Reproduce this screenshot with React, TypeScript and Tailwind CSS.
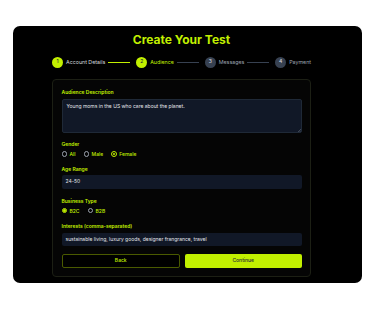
const steps = [
  { n: 1, label: "Account Details", state: "done" },
  { n: 2, label: "Audience", state: "current" },
  { n: 3, label: "Messages", state: "todo" },
  { n: 4, label: "Payment", state: "todo" },
];

function Radio({ label, checked }: { label: string; checked?: boolean }) {
  return (
    <label className="flex items-center gap-[2.5px]">
      <span
        className={`w-[5.5px] h-[5.5px] rounded-full border-[0.6px] flex items-center justify-center ${
          checked ? "border-[#c2f000]" : "border-[#9ca3af]"
        }`}
      >
        {checked && <span className="w-[2.5px] h-[2.5px] rounded-full bg-[#c2f000]" />}
      </span>
      <span className="text-[5px] leading-[6px] font-medium text-[#c2f000]">{label}</span>
    </label>
  );
}

function Label({ children }: { children: React.ReactNode }) {
  return <div className="text-[5px] leading-[6px] font-semibold text-[#c2f000]">{children}</div>;
}

export default function App() {
  return (
    <div className="w-[375px] h-[310px] bg-white overflow-hidden" style={{ fontFamily: "Inter, 'Liberation Sans', sans-serif" }}>
      <div className="mt-[26px] ml-[13px] w-[349px] h-[257px] rounded-[7px] bg-black pl-[39px]">
        <div className="w-[259px]">
          <h1 className="pt-[6px] text-center text-[12px] leading-[16px] font-bold text-[#c2f000]">Create Your Test</h1>

          {/* stepper */}
          <div className="mt-[8.5px] flex items-center gap-[6px]">
            {steps.map((s, i) => (
              <div key={s.n} className={`flex items-center gap-[3px] ${i < 3 ? "flex-auto" : ""}`}>
                <span
                  className={`w-[11px] h-[11px] rounded-full flex items-center justify-center text-[5px] font-medium shrink-0 ${
                    s.state === "todo" ? "bg-[#374151] text-[#d1d5db]" : "bg-[#c2f000] text-[#1f2937]"
                  }`}
                >
                  {s.n}
                </span>
                <span
                  className={`text-[5.3px] leading-[6px] whitespace-nowrap ${
                    s.state === "current" ? "text-[#c2f000]" : s.state === "done" ? "text-[#d1d5db]" : "text-[#9ca3af]"
                  }`}
                >
                  {s.label}
                </span>
                {i < 3 && (
                  <span className={`flex-1 h-[1px] ${s.state === "done" ? "bg-[#c2f000]" : "bg-[#374151]"}`} />
                )}
              </div>
            ))}
          </div>

          {/* form panel */}
          <div className="mt-[11.5px] rounded-[4px] border-[0.6px] border-[#1c1f14] bg-[#050505] pt-[9px] px-[8.5px] pb-[8px]">
            <Label>Audience Description</Label>
            <div className="relative mt-[4px]">
              <textarea
                readOnly
                value="Young moms in the US who care about the planet."
                className="block w-full h-[34px] resize-none rounded-[2px] border-[0.6px] border-[#1f2937] bg-[#111827] px-[4px] py-[3px] text-[5px] leading-[6px] text-[#e5e7eb] outline-none"
              />
              <svg className="absolute right-[1px] bottom-[1px]" width="3" height="3" viewBox="0 0 3 3">
                <path d="M3 0L0 3M3 1.5L1.5 3" stroke="#6b7280" strokeWidth="0.5" />
              </svg>
            </div>

            <div className="mt-[8px]">
              <Label>Gender</Label>
              <div className="mt-[4px] flex items-center gap-[8px]">
                <Radio label="All" />
                <Radio label="Male" />
                <Radio label="Female" checked />
              </div>
            </div>

            <div className="mt-[9px]">
              <Label>Age Range</Label>
              <div className="mt-[3px] h-[14px] rounded-[2px] bg-[#111827] px-[4px] flex items-center text-[5px] text-[#e5e7eb]">
                24-50
              </div>
            </div>

            <div className="mt-[9px]">
              <Label>Business Type</Label>
              <div className="mt-[3.5px] flex items-center gap-[8px]">
                <Radio label="B2C" checked />
                <Radio label="B2B" />
              </div>
            </div>

            <div className="mt-[9px]">
              <Label>Interests (comma-separated)</Label>
              <div className="mt-[4px] h-[13.5px] rounded-[2px] bg-[#111827] px-[4px] flex items-center text-[5px] text-[#e5e7eb]">
                sustainable living, luxury goods, designer frangrance, travel
              </div>
            </div>

            <div className="mt-[8px] flex gap-[5px]">
              <button className="flex-1 h-[14px] rounded-[2px] border-[0.7px] border-[#4a5a00] bg-black text-[5px] font-medium text-[#c2f000]">
                Back
              </button>
              <button className="flex-1 h-[14px] rounded-[2px] bg-[#c2f000] text-[5px] font-medium text-[#1f2937]">
                Continue
              </button>
            </div>
          </div>
        </div>
      </div>
    </div>
  );
}
